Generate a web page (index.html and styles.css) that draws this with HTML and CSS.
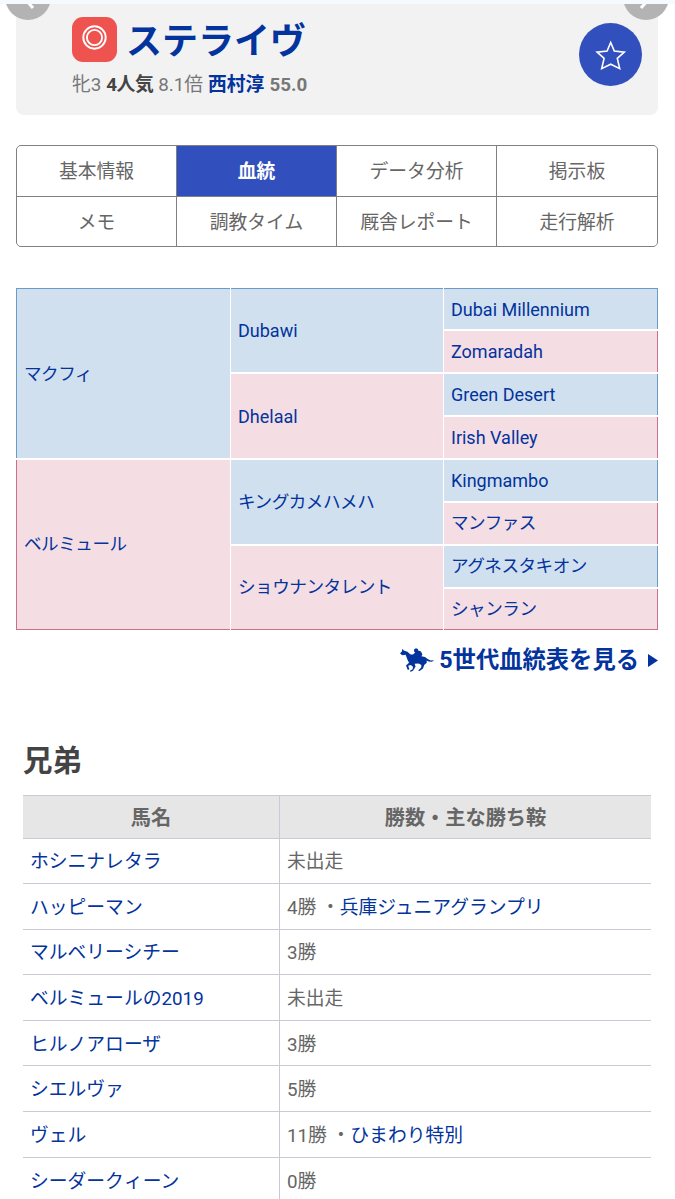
FILE: index.html
```html
<!DOCTYPE html>
<html lang="ja">
<head>
    <meta charset="UTF-8">
    <meta name="viewport" content="width=device-width, initial-scale=1.0">
    <title>ステライヴ 血統</title>
    <link rel="stylesheet" href="styles.css">
</head>
<body>
    <div class="page">
        <!-- Horse header -->
        <header class="horse">
            <div class="horse-info">
                <div class="horse-title">
                    <span class="mark">
                        <svg width="26" height="26" viewBox="0 0 26 26" fill="none" stroke="#fff" stroke-width="1.9"><circle cx="12.5" cy="12.5" r="11.2"/><circle cx="12.5" cy="12.5" r="7.6"/></svg>
                    </span>
                    <h1>ステライヴ</h1>
                </div>
                <p class="horse-data"><span>牝3</span><b class="rank">4人気</b><span>8.1倍</span><a class="jockey">西村淳</a><b>55.0</b></p>
            </div>
            <button class="fav">
                <svg width="32" height="32" viewBox="0 0 32 32" fill="none" stroke="#fff" stroke-width="1.6"><path d="M15.7 3.5 19.3 12 29.3 13.2 22.3 19.4 24.7 29.6 15.7 25.2 6.7 29.6 9.1 19.4 2.1 13.2 12.1 12Z"/></svg>
            </button>
            <span class="arrow prev"><svg width="46" height="46" viewBox="0 0 46 46" fill="none" stroke="#fff" stroke-width="3"><path d="M28 16 20 25 28 34"/></svg></span>
            <span class="arrow next"><svg width="46" height="46" viewBox="0 0 46 46" fill="none" stroke="#fff" stroke-width="3"><path d="M18 16 26 25 18 34"/></svg></span>
            <span class="topbar"></span>
        </header>

        <!-- Tabs -->
        <nav class="tabs">
            <a>基本情報</a>
            <a class="active">血統</a>
            <a>データ分析</a>
            <a>掲示板</a>
            <a>メモ</a>
            <a>調教タイム</a>
            <a>厩舎レポート</a>
            <a>走行解析</a>
        </nav>

        <!-- Pedigree -->
        <div class="pedigree">
            <a class="male g1 first kana">マクフィ</a>
            <a class="male g2 first">Dubawi</a>
            <a class="male g3 first">Dubai Millennium</a>
            <a class="female g3">Zomaradah</a>
            <a class="female g2">Dhelaal</a>
            <a class="male g3">Green Desert</a>
            <a class="female g3">Irish Valley</a>
            <a class="female g1 last kana">ベルミュール</a>
            <a class="male g2 kana">キングカメハメハ</a>
            <a class="male g3">Kingmambo</a>
            <a class="female g3 kana">マンファス</a>
            <a class="female g2 last kana">ショウナンタレント</a>
            <a class="male g3 kana">アグネスタキオン</a>
            <a class="female g3 last kana">シャンラン</a>
        </div>

        <a class="more">
            <svg class="runner" width="34" height="24" viewBox="0 0 34 24" fill="#03339c"><path d="M0 5.6 2 3.2 2.2.8 3.8 2.4 7.4 3.8 10.6 6.6 13 6.4 15.2 4.6 14 3.6 14.2 1.2 16 .2 17.8 1 18.2 2.6 21 3.6 22.4 6.4 21.4 8.2 25 9 27.6 11 30.6 12.6 34 12.2 32 13.8 28.6 13.6 26.6 12.4 26.8 14.8 24.2 17 23 20.4 19.6 23 18.2 22.4 21.2 19.6 21.4 17 18.6 15.4 14.6 15.8 15.6 18.6 13.2 22.6 10.4 24 10.2 22.6 12.6 21.2 13 18.8 10.8 17 8.2 17.8 9.4 21.2 7.8 22 6 17.4 9 14.8 7.4 11.4 5.6 6.8 2.4 7.2Z"/></svg>
            <span>5世代血統表を見る</span>
            <svg width="10" height="13" viewBox="0 0 10 13" fill="#03339c"><path d="M0 0 10 6.5 0 13Z"/></svg>
        </a>

        <!-- Siblings -->
        <section class="siblings">
            <h2>兄弟</h2>
            <table>
                <tr><th>馬名</th><th>勝数・主な勝ち鞍</th></tr>
                <tr><td><a>ホシニナレタラ</a></td><td>未出走</td></tr>
                <tr><td><a>ハッピーマン</a></td><td>4勝 <i>・</i><a>兵庫ジュニアグランプリ</a></td></tr>
                <tr><td><a>マルベリーシチー</a></td><td>3勝</td></tr>
                <tr><td><a>ベルミュールの2019</a></td><td>未出走</td></tr>
                <tr><td><a>ヒルノアローザ</a></td><td>3勝</td></tr>
                <tr><td><a>シエルヴァ</a></td><td>5勝</td></tr>
                <tr><td><a>ヴェル</a></td><td>11勝 <i>・</i><a>ひまわり特別</a></td></tr>
                <tr><td><a>シーダークィーン</a></td><td>0勝</td></tr>
            </table>
        </section>
    </div>
</body>
</html>
```
FILE: styles.css
```css
* { box-sizing: border-box; }
body { margin: 0; background: #fff; color: #666; font-family: Roboto, "Noto Sans CJK JP", sans-serif; font-size: 18.8px; }
h1, h2, p { margin: 0; }
a { color: #03339c; }
i { font-style: normal; }
.page { height: 1199px; overflow: hidden; padding: 0 17px 0 16px; }

.horse { position: relative; height: 115px; background: #f2f2f2; border-radius: 0 0 8px 8px; display: flex; justify-content: space-between; padding: 17px 16px 0 56px; }
.horse-title { display: flex; align-items: center; gap: 9px; height: 45px; }
.mark { width: 45px; height: 45px; border-radius: 11px; background: #ef5350; display: flex; justify-content: center; padding-top: 8px; }
h1 { color: #03339c; font-size: 36px; line-height: 45px; padding-top: 6px; }
.horse-data { display: flex; gap: 5px; margin-top: 9px; line-height: 28px; color: #777; }
.rank { color: #444; letter-spacing: -0.5px; }
.jockey { font-weight: bold; }
.fav { width: 63px; height: 63px; margin-top: 6px; padding: 0; border: none; border-radius: 50%; background: #3150be; display: flex; align-items: center; justify-content: center; }
.arrow { position: absolute; top: -26px; width: 46px; height: 46px; border-radius: 50%; background: #b3b3b3; }
.prev { left: -11px; }
.next { right: -11px; }
.topbar { position: absolute; top: 0; left: -16px; right: -17px; height: 4px; background: #f5faff; }

.tabs { display: grid; grid-template-columns: 159px 159px 159px 160px; grid-template-rows: 50px 50px; gap: 1px; margin-top: 30px; height: 102px; border: 1px solid #808080; border-radius: 5px; background: #808080; overflow: hidden; }
.tabs a { background: #fff; color: #666; text-align: center; line-height: 52px; }
.tabs .active { background: #3150be; color: #fff; font-weight: bold; }

.pedigree { display: grid; grid-template-columns: 213.5px 211.5px 214px; grid-template-rows: repeat(8, 1fr); gap: 1.5px; height: 342px; margin-top: 41px; font-size: 18px; }
.pedigree a { display: flex; align-items: center; padding: 0 7px; }
.pedigree .kana { font-size: 17.6px; letter-spacing: -0.5px; padding-bottom: 3px; }
.male { background: #d0e0ef; border: 0 solid #6a9cc9; }
.female { background: #f4dde3; border: 0 solid #cb7088; }
.g1 { grid-row: span 4; border-left-width: 1px; }
.g2 { grid-row: span 2; }
.g3 { border-right-width: 1px; }
.first { border-top-width: 1px; }
.last { border-bottom-width: 1px; }

.more { display: flex; align-items: center; justify-content: flex-end; height: 32px; margin-top: 14px; font-size: 23.3px; font-weight: bold; }
.runner { margin-right: 5px; }
.more span { margin-right: 9px; line-height: 32px; }

.siblings { padding: 64px 7px 0; }
h2 { color: #444; font-size: 29.5px; line-height: 42px; }
table { width: 628px; margin-top: 13px; border-collapse: collapse; table-layout: fixed; }
th, td { border-top: 1px solid #c8cbd4; padding: 3px 7px 0; line-height: 30px; }
th:first-child, td:first-child { width: 256.5px; border-right: 1px solid #c8cbd4; }
tr { height: 45.6px; }
tr:first-child { height: 42.5px; }
th { background: #e6e6e6; font-size: 20.2px; }
td { text-align: left; }
```
